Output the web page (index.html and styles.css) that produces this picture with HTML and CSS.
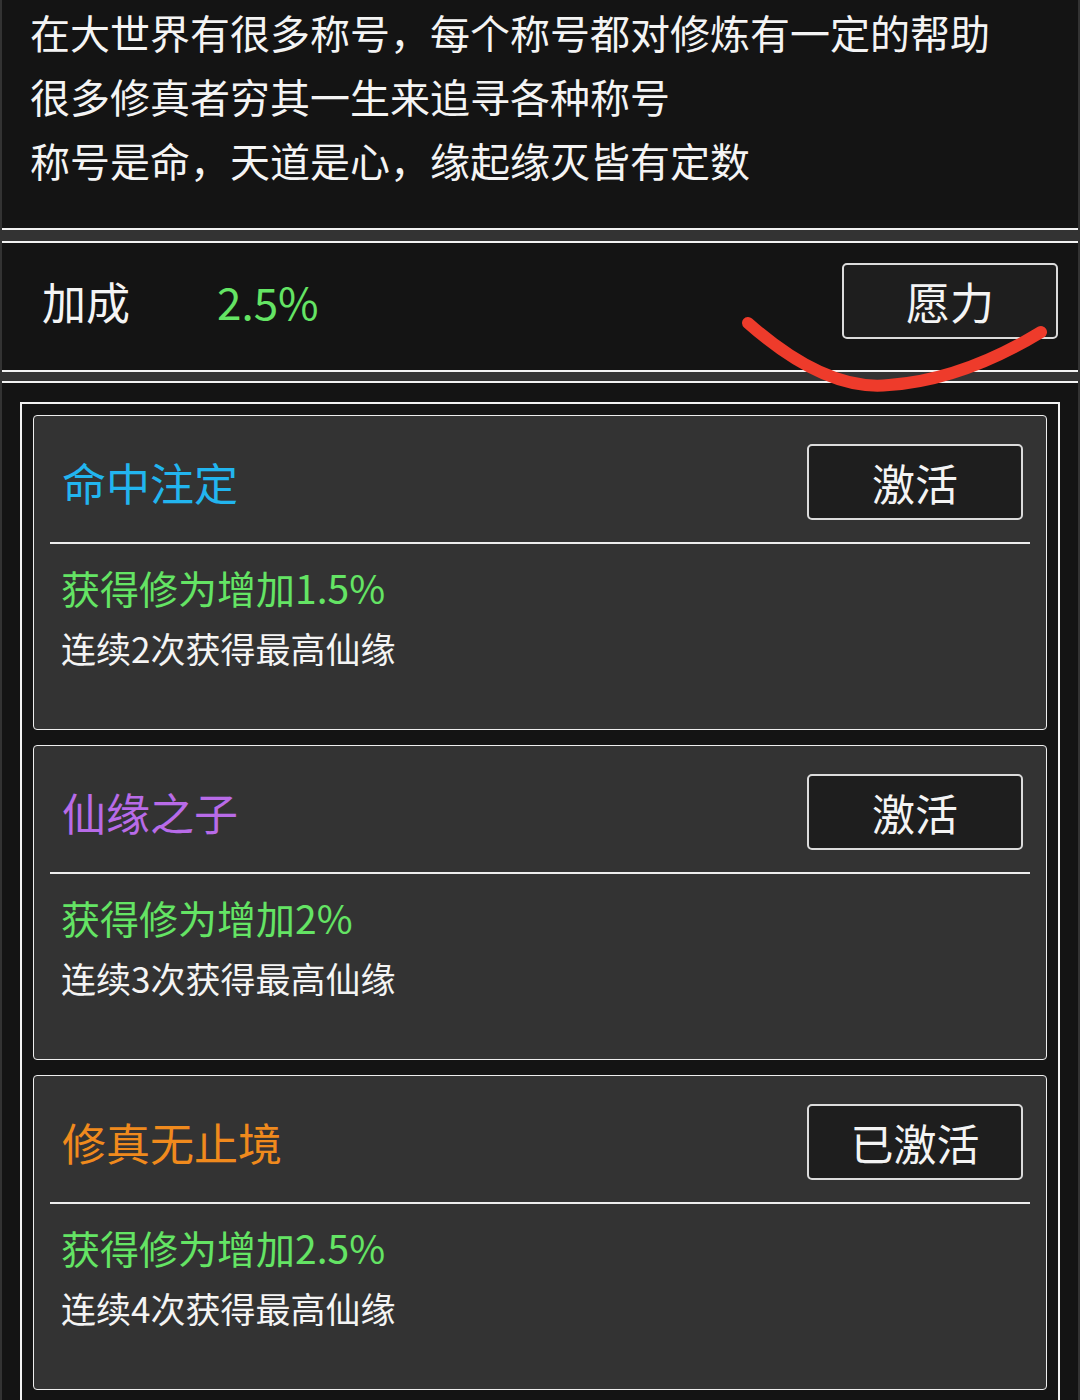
FILE: index.html
```html
<!DOCTYPE html>
<html>
<head>
<meta charset="utf-8">
<title>称号</title>
<link rel="stylesheet" href="styles.css">
</head>
<body>
<div class="intro">
    <p>在大世界有很多称号，每个称号都对修炼有一定的帮助</p>
    <p>很多修真者穷其一生来追寻各种称号</p>
    <p>称号是命，天道是心，缘起缘灭皆有定数</p>
</div>

<div class="bonus">
    <span class="bonus_label">加成</span>
    <span class="bonus_value">2.5%</span>
    <a class="button bonus_btn" href="#">愿力</a>
</div>

<div class="list">
    <div class="list_box">
        <div class="card">
            <div class="card_head">
                <span class="title cyan">命中注定</span>
                <a class="button" href="#">激活</a>
            </div>
            <div class="effect">获得修为增加1.5%</div>
            <div class="cond">连续2次获得最高仙缘</div>
        </div>
        <div class="card">
            <div class="card_head">
                <span class="title purple">仙缘之子</span>
                <a class="button" href="#">激活</a>
            </div>
            <div class="effect">获得修为增加2%</div>
            <div class="cond">连续3次获得最高仙缘</div>
        </div>
        <div class="card">
            <div class="card_head">
                <span class="title orange">修真无止境</span>
                <a class="button" href="#">已激活</a>
            </div>
            <div class="effect">获得修为增加2.5%</div>
            <div class="cond">连续4次获得最高仙缘</div>
        </div>
    </div>
</div>

<!-- red mark drawn over the screen -->
<svg class="scribble" width="1080" height="420" viewBox="0 0 1080 420">
    <path d="M748 323 Q 826 392 889 385 Q 962 380 1041 332" fill="none" stroke="#ee3b2b" stroke-width="12" stroke-linecap="round"/>
</svg>
</body>
</html>
```

FILE: styles.css
```css
body {
margin:0;
background:#333333;
font-family:"Noto Sans CJK SC", "Noto Sans", sans-serif;
color:#f4f4f4;
position:relative;
}

.intro {
margin:0 2px;
background:#141414;
padding:0 0 0 28px;
box-sizing:border-box;
border-bottom:2px solid #f2f2f2;
height:230px;
}

.intro p {
margin:0;
font-size:40px;
line-height:64px;
}

.bonus {
margin:11px 2px 0 2px;
background:#141414;
border-top:2px solid #f2f2f2;
border-bottom:2px solid #f2f2f2;
height:131px;
box-sizing:border-box;
padding:20px 20px 31px 40px;
display:flex;
align-items:center;
}

.bonus_label {
font-size:44px;
width:175px;
}

.bonus_value {
font-size:44px;
color:#64e464;
flex:1;
}

.button {
display:flex;
align-items:center;
justify-content:center;
width:216px;
height:76px;
box-sizing:border-box;
background:#1e1e1e;
border:2px solid #dcdcdc;
border-radius:5px;
color:#f4f4f4;
text-decoration:none;
font-size:43px;
}

.bonus_btn {
font-size:44px;
}

.list {
margin:9px 2px 0 2px;
background:#141414;
border-top:2px solid #f2f2f2;
padding:19px 18px 0 18px;
}

.list_box {
border:2px solid #f2f2f2;
padding:11px 11px;
display:flex;
flex-direction:column;
gap:15px;
}

.card {
background:#333333;
border:1px solid #eeeeee;
border-radius:4px;
height:315px;
box-sizing:border-box;
padding:28px 16px 0 16px;
}

.card_head {
display:flex;
align-items:center;
justify-content:space-between;
padding:0 7px 22px 12px;
border-bottom:2px solid #eeeeee;
margin-bottom:13px;
}

.title {
font-size:44px;
}

.cyan { color:#22b5ef; }
.purple { color:#b86be8; }
.orange { color:#f08a1d; }

.effect {
font-size:39px;
line-height:60px;
color:#64e464;
padding-left:11px;
}

.cond {
font-size:35px;
line-height:62px;
padding-left:11px;
}

.scribble {
position:absolute;
left:0;
top:0;
pointer-events:none;
}
```
